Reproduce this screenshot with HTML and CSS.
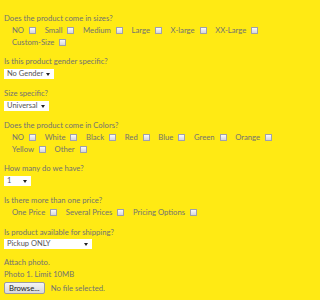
FILE: index.html
```html
<!DOCTYPE html>
<html>
<head>
<meta charset="utf-8">
<link rel="stylesheet" href="styles.css">
</head>
<body>
<form class="form">
  <div class="field">
    <div class="q">Does the product come in sizes?</div>
    <div class="opts">
      <label class="opt">NO<input type="checkbox" class="cb"></label>
      <label class="opt">Small<input type="checkbox" class="cb"></label>
      <label class="opt">Medium<input type="checkbox" class="cb"></label>
      <label class="opt">Large<input type="checkbox" class="cb"></label>
      <label class="opt">X-large<input type="checkbox" class="cb"></label>
      <label class="opt">XX-Large<input type="checkbox" class="cb"></label>
      <label class="opt">Custom-Size<input type="checkbox" class="cb"></label>
    </div>
  </div>
  <div class="field">
    <div class="q">Is this product gender specific?</div>
    <span class="sel"><span class="sel-text">No Gender</span><span class="arrow"></span></span>
  </div>
  <div class="field">
    <div class="q">Size specific?</div>
    <span class="sel"><span class="sel-text">Universal</span><span class="arrow"></span></span>
  </div>
  <div class="field">
    <div class="q">Does the product come in Colors?</div>
    <div class="opts">
      <label class="opt">NO<input type="checkbox" class="cb"></label>
      <label class="opt">White<input type="checkbox" class="cb"></label>
      <label class="opt">Black<input type="checkbox" class="cb"></label>
      <label class="opt">Red<input type="checkbox" class="cb"></label>
      <label class="opt">Blue<input type="checkbox" class="cb"></label>
      <label class="opt">Green<input type="checkbox" class="cb"></label>
      <label class="opt">Orange<input type="checkbox" class="cb"></label>
      <label class="opt">Yellow<input type="checkbox" class="cb"></label>
      <label class="opt">Other<input type="checkbox" class="cb"></label>
    </div>
  </div>
  <div class="field">
    <div class="q">How many do we have?</div>
    <span class="sel w-qty"><span class="sel-text">1</span><span class="arrow"></span></span>
  </div>
  <div class="field field-price">
    <div class="q">Is there more than one price?</div>
    <div class="opts">
      <label class="opt">One Price<input type="checkbox" class="cb"></label>
      <label class="opt">Several Prices<input type="checkbox" class="cb"></label>
      <label class="opt">Pricing Options<input type="checkbox" class="cb"></label>
    </div>
  </div>
  <div class="field">
    <div class="q">Is product available for shipping?</div>
    <span class="sel sel-last w-ship"><span class="sel-text">Pickup ONLY</span><span class="arrow"></span></span>
  </div>
  <div class="field">
    <div class="q">Attach photo.</div>
    <div class="q">Photo 1. Limit 10MB</div>
    <div class="file">
      <button type="button" class="browse">Browse...</button>
      <span class="nofile">No file selected.</span>
    </div>
  </div>
</form>
</body>
</html>
```
FILE: styles.css
```css
html, body {
  margin: 0;
  padding: 0;
  background: #ffea14;
}
body {
  font-family: Lato, "Open Sans", sans-serif;
  font-size: 7.7px;
  color: #727272;
}
.form {
  padding: 12px 4px 0 4px;
  display: flex;
  flex-direction: column;
  gap: 7px;
}
.field {
  display: flex;
  flex-direction: column;
  align-items: flex-start;
}
.field-price {
  margin-bottom: 1px;
}
.q {
  line-height: 12px;
}
.opts {
  display: flex;
  flex-wrap: wrap;
  padding-left: 8px;
  width: 270px;
  column-gap: 8.6px;
}
.opt {
  display: flex;
  align-items: center;
  gap: 5px;
  line-height: 12px;
}
.cb {
  appearance: none;
  -webkit-appearance: none;
  width: 7px;
  height: 7px;
  margin: 0;
  border: 1px solid #a0a0ac;
  background: linear-gradient(#fafafa, #d6d6dc);
  box-sizing: border-box;
}
.sel {
  position: relative;
  display: flex;
  align-items: center;
  height: 10px;
  margin: 2px 0 1px 0;
  background: #fff;
  color: #555;
  padding: 0 11px 0 3px;
  box-sizing: border-box;
  line-height: 10px;
  font-size: 7.5px;
}
.sel-last {
  margin: 1px 0 0 0;
}
.w-qty { width: 27px; }
.w-ship { width: 88px; }
.arrow {
  position: absolute;
  right: 4px;
  top: 4px;
  width: 0;
  height: 0;
  border-left: 2px solid transparent;
  border-right: 2px solid transparent;
  border-top: 3px solid #222;
}
.file {
  display: flex;
  align-items: center;
  gap: 6px;
  margin-top: 2px;
}
.browse {
  font-family: Lato, "Open Sans", sans-serif;
  font-size: 7.7px;
  color: #222;
  height: 12px;
  padding: 0 4px;
  border: 1px solid #9a9aa6;
  border-radius: 2px;
  background: linear-gradient(#f4f4f4, #d9d9dc);
  line-height: 10px;
}
.nofile {
  color: #727272;
}
```
